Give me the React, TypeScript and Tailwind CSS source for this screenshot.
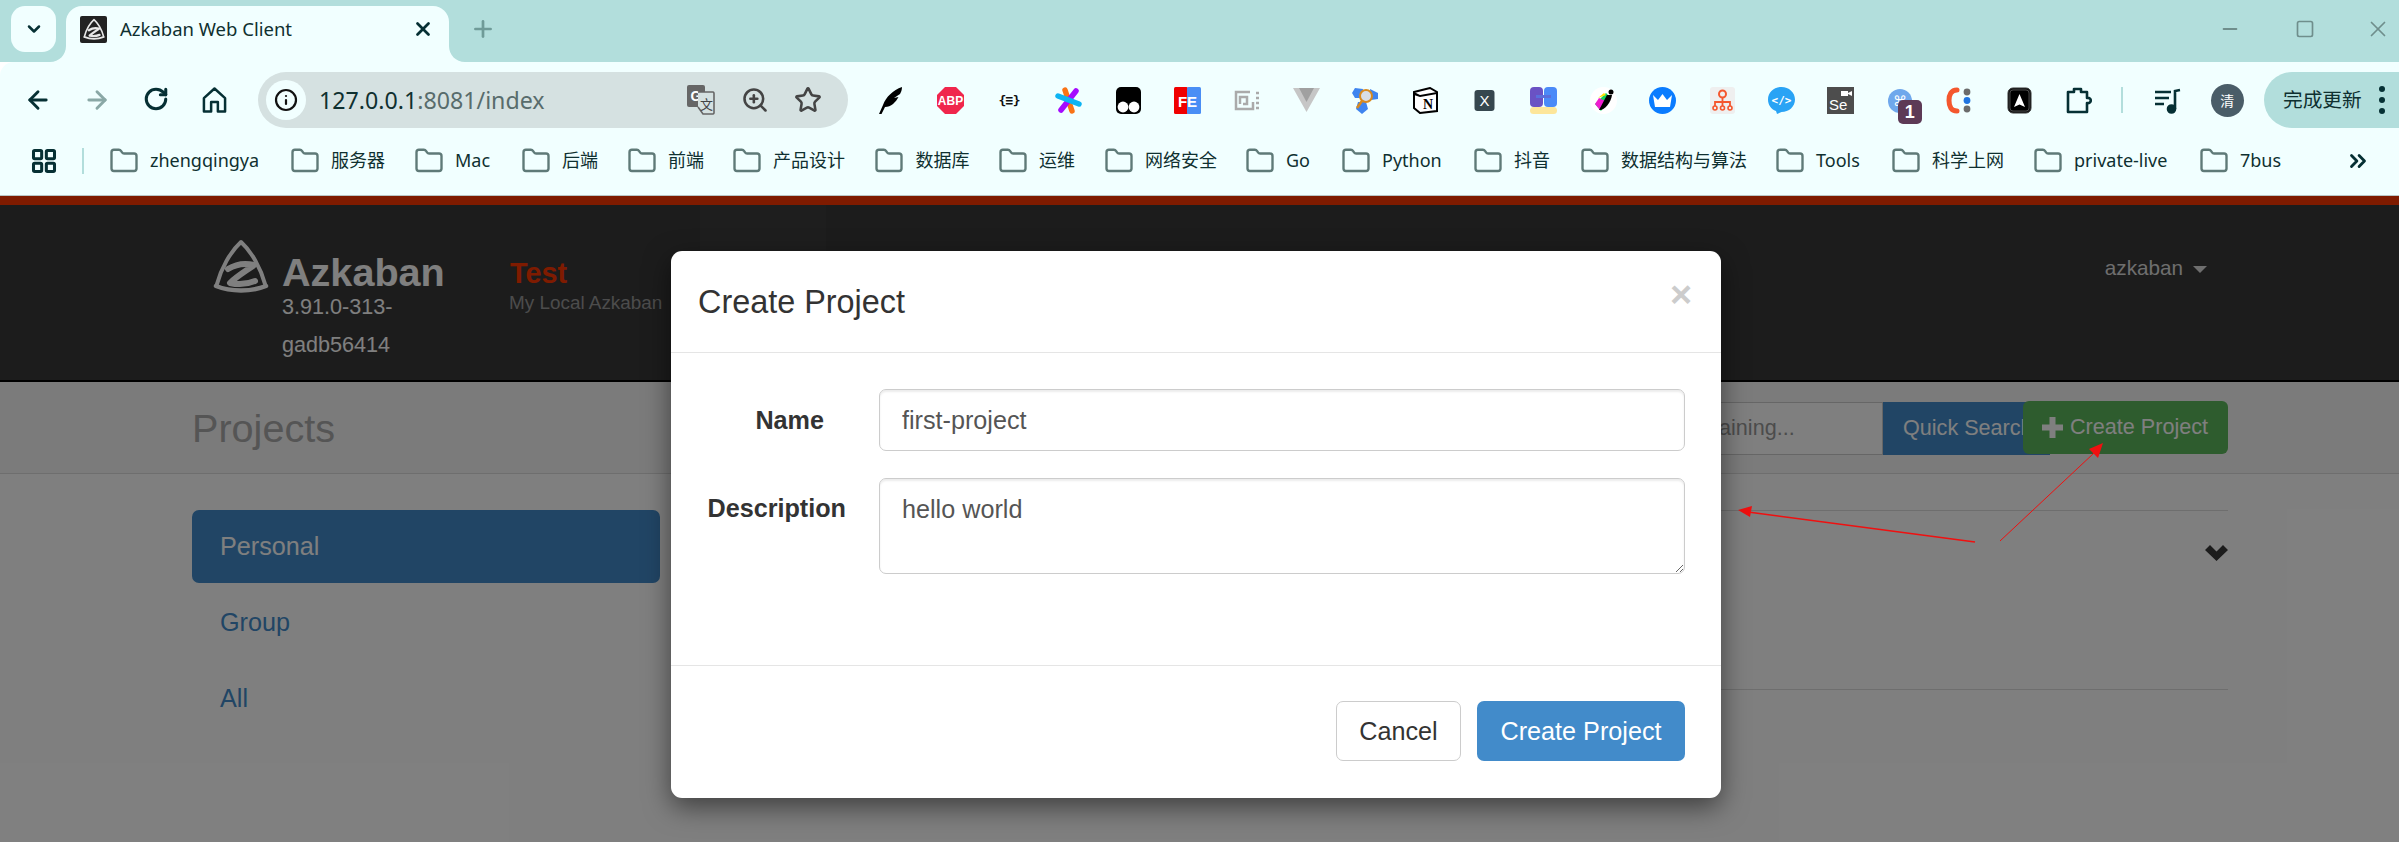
import { ArrowLeft, ArrowRight, ChevronDown, ChevronsRight, Folder, Info, LayoutGrid, Minus, Plus, RotateCw, Square, Star, X, ZoomIn } from 'lucide-react';

const BOOKMARKS = [
  { label: 'zhengqingya', w: 'w-[111px]' },
  { label: '服务器', w: 'w-[54px]' },
  { label: 'Mac', w: 'w-[37px]' },
  { label: '后端', w: 'w-[36px]' },
  { label: '前端', w: 'w-[35px]' },
  { label: '产品设计', w: 'w-[72.5px]' },
  { label: '数据库', w: 'w-[53.5px]' },
  { label: '运维', w: 'w-[36px]' },
  { label: '网络安全', w: 'w-[71px]' },
  { label: 'Go', w: 'w-[26px]' },
  { label: 'Python', w: 'w-[62px]' },
  { label: '抖音', w: 'w-[37px]' },
  { label: '数据结构与算法', w: 'w-[125px]' },
  { label: 'Tools', w: 'w-[46px]' },
  { label: '科学上网', w: 'w-[72px]' },
  { label: 'private-live', w: 'w-[96px]' },
  { label: '7bus', w: 'w-[42px]' },
];

function AzkabanLogo({ className, color }: { className: string; color: string }) {
  return (
    <svg viewBox="0 0 56 54" className={className} fill="none" stroke={color} strokeLinecap="round" strokeLinejoin="round">
      <path d="M4 45 C8 30 17 13 28 3 C39 13 48 30 52 45" strokeWidth="4" />
      <path d="M3 47 C18 53 38 53 53 47" strokeWidth="4.5" />
      <path d="M15 30 C23 25 33 24 41 26 C33 32 24 37 17 44 C26 46 35 45 42 42" strokeWidth="6" />
    </svg>
  );
}

function ExtensionIcons() {
  const box = 'w-[27px] h-[27px]';
  return [
    <svg key="feather" viewBox="0 0 27 27" className={box}><path d="M25 0 C16 3 9 10 6 18 L2 27 L4.5 27 L8 20 C14 20 19 15 21.5 10 L17 11 L23 7 C24 5 25 3 25 0 Z" fill="#000" /></svg>,
    <svg key="abp" viewBox="0 0 27 27" className={box}><polygon points="8,0 19,0 27,8 27,19 19,27 8,27 0,19 0,8" fill="#f0264c" /><text x="13.5" y="18" textAnchor="middle" fontSize="12" fontWeight="700" fill="#fff" fontFamily="Liberation Sans">ABP</text></svg>,
    <svg key="json" viewBox="0 0 27 27" className={box}><text x="13.5" y="18" textAnchor="middle" fontSize="13" fontWeight="700" fill="#111" fontFamily="DejaVu Sans Mono" textLength="22">{'{≡}'}</text></svg>,
    <svg key="aster" viewBox="0 0 27 27" className={box} strokeLinecap="round" strokeWidth="5.5"><path d="M10 3 L17 24" stroke="#f97316" /><path d="M21 4 L6 23" stroke="#a50bff" /><path d="M3 9 L24 17" stroke="#0db4f3" /></svg>,
    <svg key="tamper" viewBox="0 0 27 27" className={box}><rect x="1" y="0" width="25" height="27" rx="5" fill="#000" /><circle cx="8" cy="20" r="5.4" fill="#fff" /><circle cx="19" cy="20" r="5.4" fill="#fff" /></svg>,
    <svg key="fe" viewBox="0 0 27 27" className={box}><rect width="14" height="27" rx="1.5" fill="#f00000" /><rect x="13" width="14" height="27" rx="1.5" fill="#4a8ef5" /><text x="13.5" y="20" textAnchor="middle" fontSize="15" fontWeight="700" fill="#fff" fontFamily="Liberation Sans">FE</text></svg>,
    <svg key="spiral" viewBox="0 0 27 27" className={box} fill="none" stroke="#aaa" strokeWidth="2.5"><path d="M16 5 H2 V22 H19 V15" /><path d="M6 17 V10 H13 V17 H9" /><path d="M22 6 H25 M22 11 H25 M22 16 H25 M22 21 H25" /></svg>,
    <svg key="vue" viewBox="0 0 27 27" className={box}><polygon points="0,1 27,1 13.5,25" fill="#c6c6c6" /><polygon points="6,1 21,1 13.5,15" fill="#a0a0a0" /></svg>,
    <svg key="hex" viewBox="0 0 27 27" className={box}><polygon points="3,1 11,2 10,11 3,11 0,6" fill="#3f84ef" /><polygon points="18,2 26,6 26,12 19,13" fill="#3f84ef" /><polygon points="6,15 14,15 16,22 10,27 4,22" fill="#3f84ef" /><circle cx="14" cy="9" r="6" fill="#d8dde6" stroke="#d98a1f" strokeWidth="2" /><path d="M10 14 L5 21" stroke="#d98a1f" strokeWidth="2.6" /></svg>,
    <svg key="notion" viewBox="0 0 27 27" className={box}><polygon points="2,5 18,1 25,5 25,24 8,26 2,21" fill="#fff" stroke="#000" strokeWidth="2" /><polygon points="2,5 8,8 25,5 25,7 8,10 2,8" fill="#000" /><text x="16" y="22" textAnchor="middle" fontSize="14" fontWeight="700" fill="#000" fontFamily="Liberation Serif">N</text></svg>,
    <svg key="x" viewBox="0 0 27 27" className={box}><rect x="3.5" y="3" width="20" height="21" rx="3" fill="#36474f" /><text x="13.5" y="19" textAnchor="middle" fontSize="15" fill="#fff" fontFamily="Liberation Sans">X</text></svg>,
    <svg key="bars" viewBox="0 0 27 27" className={box}><rect width="13" height="20" rx="4" fill="#6a52c4" /><rect x="14" width="13" height="20" rx="4" fill="#4a8af8" /><rect x="6" y="8" width="15" height="3" fill="#5a6fdc" /><rect y="20" width="27" height="7" rx="3.5" fill="#fde69a" /></svg>,
    <svg key="colour" viewBox="0 0 27 27" className={box}><circle cx="13.5" cy="13.5" r="13.5" fill="#fff" /><path d="M5 17 L16 6 L20 10 L11 24 Z" fill="#12d05c" /><path d="M5 17 L9 11 L15 14 L10 23 Z" fill="#f01cd0" /><path d="M9 23 C14 24 21 16 22 8 L17 8 Z" fill="#000" /><circle cx="21" cy="5" r="2.5" fill="#000" /><path d="M8 11 L14 6 L16 8 Z" fill="#ffe100" /></svg>,
    <svg key="crown" viewBox="0 0 27 27" className={box}><circle cx="13.5" cy="13.5" r="13.5" fill="#0a7cff" /><polygon points="4,8 9,13 13.5,7 18,13 23,8 21,20 6,20" fill="#fff" /></svg>,
    <svg key="tree" viewBox="0 0 27 27" className={box} fill="none"><rect x="1" width="25" height="27" rx="3" fill="#efefef" /><circle cx="13.5" cy="7" r="3.5" stroke="#f4572e" strokeWidth="2" /><path d="M13.5 10 V15 M6 19 V15 H21 V19 M13.5 15 V19" stroke="#f4572e" strokeWidth="1.8" /><circle cx="6" cy="21" r="2" stroke="#f4572e" strokeWidth="1.6" /><circle cx="13.5" cy="21" r="2" stroke="#f4572e" strokeWidth="1.6" /><circle cx="21" cy="21" r="2" stroke="#f4572e" strokeWidth="1.6" /></svg>,
    <svg key="bubble" viewBox="0 0 27 27" className={box}><path d="M13.5 0 C21 0 27 5.5 27 12.5 C27 19.5 21 25 13.5 25 L9 27 L8 24 C3 22 0 18 0 12.5 C0 5.5 6 0 13.5 0 Z" fill="#29a3f5" /><text x="13.5" y="17" textAnchor="middle" fontSize="11" fontWeight="700" fill="#fff" fontFamily="DejaVu Sans Mono">{'</>'}</text></svg>,
    <svg key="se" viewBox="0 0 27 27" className={box}><rect width="27" height="27" fill="#4d4d4d" /><text x="2" y="23" fontSize="15" fill="#fff" fontFamily="Liberation Sans">Se</text><rect x="14" y="4" width="7" height="5" fill="#fff" /><polygon points="21,6 25,4 25,9 21,7" fill="#fff" /></svg>,
    <div key="cmd" className="relative w-[27px] h-[27px]">
      <svg viewBox="0 0 27 27" className={box}><circle cx="13" cy="14" r="12" fill="#6fa8ec" /><text x="13" y="19" textAnchor="middle" fontSize="14" fill="#fff" fontFamily="DejaVu Sans">⌘</text></svg>
      <div className="absolute left-[11px] top-[13px] w-[24px] h-[24px] rounded-[5px] bg-[#5d3a56] text-white text-[18px] font-bold leading-[24px] text-center font-['Liberation_Sans',sans-serif]">1</div>
    </div>,
    <svg key="c" viewBox="0 0 27 27" className={box}><path d="M11 3 C5 3 3 8 3 13.5 C3 19 5 24 11 24" fill="none" stroke="#f4572e" strokeWidth="5" strokeLinecap="round" /><circle cx="21" cy="5" r="3.4" fill="#6b6b6b" /><circle cx="21" cy="13.5" r="3.4" fill="#1f74e0" /><circle cx="21" cy="22" r="3.4" fill="#6b6b6b" /></svg>,
    <svg key="doc" viewBox="0 0 27 27" className={box}><rect x="2" y="1" width="23" height="25" rx="5" fill="#111" stroke="#333" /><rect x="4" y="3" width="19" height="21" rx="3" fill="#000" stroke="#777" strokeWidth="0.6" /><polygon points="13.5,7 19,20 13.5,17.5 8,20" fill="#fff" /></svg>,
    <svg key="puzzle" viewBox="0 0 27 27" className={box} fill="none" stroke="#063034" strokeWidth="2.6" strokeLinejoin="round"><path d="M3 5 H9 V2 H16 V5 H22 V11 C27 10 27 17 22 16 V25 H3 C3 22 3 8 3 5 Z" /></svg>,
  ];
}

function TabStrip() {
  return (
    <div className="h-[62px] bg-[#b2dedc] flex items-start">
      <div className="ml-[11px] mt-[6px] w-[45px] h-[46px] rounded-[14px] bg-[#f1ffff] flex items-center justify-center text-[#063034]">
        <ChevronDown size={20} strokeWidth={3} />
      </div>
      <div className="relative ml-[10px] mt-[6px] w-[383px] h-[56px] rounded-t-[16px] bg-[#f1ffff] flex items-center pl-[14px] pb-[10px]">
        <svg viewBox="0 0 16 16" className="absolute -left-[16px] bottom-0 w-[16px] h-[16px]"><path d="M16 0 V16 H0 C9 16 16 9 16 0 Z" fill="#f1ffff" /></svg>
        <svg viewBox="0 0 16 16" className="absolute -right-[16px] bottom-0 w-[16px] h-[16px]"><path d="M0 0 V16 H16 C7 16 0 9 0 0 Z" fill="#f1ffff" /></svg>
        <div className="w-[27px] h-[27px] bg-[#222] rounded-[2px] flex items-center justify-center">
          <AzkabanLogo className="w-[22px] h-[24px]" color="#e8e8e8" />
        </div>
        <span className="ml-[13px] text-[18.5px] text-[#0f3030]">Azkaban Web Client</span>
        <X size={22} strokeWidth={3} className="ml-auto mr-[15px] text-[#063034]" />
      </div>
      <Plus size={26} strokeWidth={2.5} className="ml-[21px] mt-[16px] text-[#6f9b98]" />
      <div className="ml-auto flex items-center h-[58px] text-[#6f8e8c] pr-[8px]">
        <Minus size={22} strokeWidth={2} />
        <Square size={20} strokeWidth={2} className="ml-[54px]" />
        <X size={26} strokeWidth={1.6} className="ml-[50px]" />
      </div>
    </div>
  );
}

function Toolbar() {
  return (
    <div className="h-[76px] bg-[#f1ffff] flex items-center rounded-tl-[14px]">
      <div className="ml-[8px] flex text-[#063034]">
        <div className="w-[59px] flex justify-center"><ArrowLeft size={28} strokeWidth={2.5} /></div>
        <div className="w-[59px] flex justify-center text-[#8aa8a6]"><ArrowRight size={28} strokeWidth={2.5} /></div>
        <div className="w-[59px] flex justify-center"><RotateCw size={26} strokeWidth={2.8} /></div>
        <div className="w-[59px] flex justify-center">
          <svg viewBox="0 0 26 28" className="w-[25px] h-[28px]" fill="none" stroke="#063034" strokeWidth="2.6" strokeLinejoin="round"><path d="M13 2 L24 12 V26 H16.5 V16 H9.5 V26 H2 V12 Z" /></svg>
        </div>
      </div>
      <div className="ml-[14px] w-[590px] h-[56px] rounded-full bg-[#d5e1e1] flex items-center">
        <div className="ml-[8px] w-[40px] h-[40px] rounded-full bg-[#f1ffff] flex items-center justify-center text-[#111]">
          <Info size={24} strokeWidth={2.2} />
        </div>
        <span className="ml-[13px] text-[23.2px] text-[#0f3030]">127.0.0.1<span className="text-[#586c6c]">:8081/index</span></span>
        <div className="ml-auto mr-[26px] flex items-center">
          <svg viewBox="0 0 28 30" className="w-[28px] h-[30px]">
            <rect x="0" y="0" width="18" height="22" rx="2" fill="#666" />
            <text x="9" y="16" textAnchor="middle" fontSize="14" fontWeight="700" fill="#fff" fontFamily="Liberation Sans">G</text>
            <path d="M11 7 H26 A1.5 1.5 0 0 1 27 8.5 V28 A1.5 1.5 0 0 1 26 29 H16 L11 22" fill="#d5e1e1" stroke="#666" strokeWidth="1.6" />
            <text x="19.5" y="24" textAnchor="middle" fontSize="13" fill="#444" fontFamily="Noto Sans CJK SC">文</text>
          </svg>
          <ZoomIn size={28} strokeWidth={2.2} className="ml-[26px] text-[#444]" />
          <Star size={28} strokeWidth={2.2} className="ml-[25px] text-[#444]" />
        </div>
      </div>
      <div className="ml-[13px] flex items-center">
        {ExtensionIcons().map((icon, i) => (
          <div key={i} className="w-[59.4px] flex justify-center">{icon}</div>
        ))}
      </div>
      <div className="ml-[13px] w-[2px] h-[26px] bg-[#b2dedc]" />
      <div className="ml-[15px] w-[59.4px] flex justify-center">
        <svg viewBox="0 0 27 27" className="w-[27px] h-[27px]" fill="none" stroke="#063034" strokeWidth="2.6"><path d="M1 5 H17 M1 11 H15 M1 17 H10" /><path d="M21 22 V4 L26 3" /><circle cx="17.5" cy="22" r="3.5" fill="#063034" /></svg>
      </div>
      <div className="w-[59.4px] flex justify-center">
        <div className="w-[33px] h-[33px] rounded-full bg-[#4a5d68] text-white text-[14px] leading-[33px] text-center">清</div>
      </div>
      <div className="ml-[7px] flex-1 h-[56px] rounded-l-[28px] bg-[#b2dedc] flex items-center pl-[19px] text-[#0f3030]">
        <span className="text-[19.7px] whitespace-nowrap">完成更新</span>
        <div className="ml-[17px] flex flex-col gap-[5px]">
          <span className="w-[6px] h-[6px] rounded-full bg-[#063034]" />
          <span className="w-[6px] h-[6px] rounded-full bg-[#063034]" />
          <span className="w-[6px] h-[6px] rounded-full bg-[#063034]" />
        </div>
      </div>
    </div>
  );
}

function BookmarksBar() {
  return (
    <div className="h-[58px] bg-[#f1ffff] border-b border-[#b9c6c6] flex items-center pb-[12px] text-[18px] text-[#0f3030]">
      <LayoutGrid size={28} strokeWidth={2.6} className="ml-[30px] text-[#063034]" />
      <div className="ml-[24px] w-[2px] h-[26px] bg-[#b2dedc]" />
      <div className="ml-[24.5px] flex items-center gap-[28.5px]">
        {BOOKMARKS.map((b) => (
          <div key={b.label} className="flex items-center gap-[11.5px]">
            <Folder size={30} strokeWidth={1.9} className="text-[#5f7a78]" />
            <span className={`${b.w} whitespace-nowrap`}>{b.label}</span>
          </div>
        ))}
      </div>
      <ChevronsRight size={26} strokeWidth={2.6} className="ml-[63px] text-[#063034]" />
    </div>
  );
}

function AzkabanPage() {
  return (
    <div className="h-[646px] bg-white text-[#333]">
      <div className="h-[9px] bg-[#ff3601]" />
      {/* navbar */}
      <div className="relative h-[177px] bg-[#383838] border-b-2 border-black flex items-start pl-[213px] pr-[192px]">
        <div className="absolute left-[700px] top-0 w-[126px] h-[46px] bg-[#3c3c3c]" />
        <AzkabanLogo className="mt-[34px] w-[56px] h-[54px]" color="#ffffff" />
        <div className="ml-[13px] mt-[45px] w-[228px]">
          <div className="text-[39.6px] leading-[44px] font-bold text-white">Azkaban</div>
          <div className="w-[130px] text-[21.6px] leading-[37.5px] text-white -mt-[6px]">3.91.0-313-gadb56414</div>
        </div>
        <div className="mt-[50px]">
          <div className="text-[28.8px] leading-[36px] font-bold text-[#ff3601]">Test</div>
          <div className="text-[18.9px] leading-[24px] text-[#999] -ml-[1px]">My Local Azkaban</div>
        </div>
        <div className="ml-auto mt-[49px] flex items-center text-[20.7px] leading-[28px] text-[#ddd]">
          azkaban
          <span className="ml-[10px] mt-[3px] w-0 h-0 border-x-[7px] border-x-transparent border-t-[7px] border-t-[#ddd]" />
        </div>
      </div>
      {/* page title and search */}
      <div className="h-[92px] bg-[#f6f6f6] border-b border-[#ddd] flex items-center pl-[192px] pr-[171px]">
        <h1 className="text-[39.6px] leading-[48px] text-[#aaa]">Projects</h1>
        <div className="ml-auto flex items-start">
          <input
            readOnly
            placeholder="Project name containing..."
            className="mt-[1px] w-[358px] h-[53px] bg-white border border-[#ccc] pl-[19px] text-[21.6px] placeholder:text-[#999] outline-none"
          />
          <div className="mt-[1px] w-[167px] h-[53px] bg-[#428bca] pl-[20px] text-[21.6px] leading-[51px] text-white whitespace-nowrap">Quick Search</div>
          <div className="relative -ml-[27px] w-[205px] h-[53px] rounded-[6px] bg-[#5cb85c] flex items-center pl-[19px] text-[21.6px] text-white">
            <svg viewBox="0 0 21 21" className="w-[21px] h-[21px]"><path d="M7.5 0 H13.5 V7.5 H21 V13.5 H13.5 V21 H7.5 V13.5 H0 V7.5 H7.5 Z" fill="#fff" /></svg>
            <span className="ml-[7px] whitespace-nowrap">Create Project</span>
          </div>
        </div>
      </div>
      {/* content */}
      <div className="flex pl-[192px] pr-[171px] pt-[36px]">
        <div className="w-[468px] flex flex-col gap-[3px] text-[25.2px] text-[#428bca]">
          <div className="h-[73px] rounded-[7px] bg-[#428bca] text-white pl-[28px] leading-[73px]">Personal</div>
          <div className="h-[73px] pl-[28px] leading-[73px]">Group</div>
          <div className="h-[73px] pl-[28px] leading-[73px]">All</div>
        </div>
        <div className="ml-[30px] flex-1 h-[180px] border-y border-[#ddd] flex justify-end pt-[34px]">
          <svg viewBox="0 0 23 16" className="w-[23px] h-[16px]"><path d="M0 5 L5 0 L11.5 6.5 L18 0 L23 5 L11.5 16 Z" fill="#383838" /></svg>
        </div>
      </div>
    </div>
  );
}

function CreateModal() {
  return (
    <div className="absolute left-[671px] top-[55px] w-[1050px] h-[547px] bg-white rounded-[11px] shadow-[0_9px_27px_rgba(0,0,0,0.5)] flex flex-col text-[#333]">
      <div className="h-[102px] shrink-0 border-b border-[#e5e5e5] flex items-center justify-between pl-[27px] pr-[29px]">
        <h2 className="text-[32.4px] leading-[44px]">Create Project</h2>
        <span className="mb-[16px] text-[37.8px] leading-[38px] font-bold text-[#ccc]">×</span>
      </div>
      <div className="h-[313px] shrink-0 border-b border-[#e5e5e5] pt-[36px] pr-[36px] flex flex-col gap-[27px] text-[25.2px]">
        <div className="flex items-start">
          <label className="w-[208px] shrink-0 pr-[55px] text-right font-bold leading-[62px]">Name</label>
          <input
            readOnly
            defaultValue="first-project"
            className="flex-1 h-[62px] rounded-[7px] border border-[#ccc] shadow-[inset_0_2px_2px_rgba(0,0,0,0.075)] px-[22px] text-[#555] outline-none"
          />
        </div>
        <div className="flex items-start">
          <label className="w-[208px] shrink-0 pr-[33px] text-right font-bold leading-[60px]">Description</label>
          <textarea
            readOnly
            defaultValue="hello world"
            className="flex-1 h-[96px] rounded-[7px] border border-[#ccc] shadow-[inset_0_2px_2px_rgba(0,0,0,0.075)] px-[22px] pt-[12px] leading-[36px] text-[#555] outline-none"
          />
        </div>
      </div>
      <div className="flex justify-end gap-[16px] pt-[35px] pr-[36px] text-[25.2px]">
        <div className="w-[125px] h-[60px] rounded-[7px] border border-[#ccc] text-center leading-[58px]">Cancel</div>
        <div className="w-[208px] h-[60px] rounded-[7px] bg-[#428bca] text-white text-center leading-[60px]">Create Project</div>
      </div>
    </div>
  );
}

export default function App() {
  return (
    <div className="w-[2399px] h-[842px] overflow-hidden bg-white">
      <div className="font-['Noto_Sans','Noto_Sans_CJK_SC',sans-serif]">
        <TabStrip />
        <Toolbar />
        <BookmarksBar />
      </div>
      <div className="relative font-['Liberation_Sans','Noto_Sans_CJK_SC',sans-serif]">
        <AzkabanPage />
        {/* modal backdrop */}
        <div className="absolute inset-0 bg-black/50" />
        {/* screenshot annotation arrows */}
        <svg className="absolute inset-0 w-[2399px] h-[646px]" viewBox="0 196 2399 646" fill="none">
          <path d="M1975 542 L1748 512" stroke="#f01010" strokeWidth="1.5" />
          <polygon points="1738,510 1752,506 1750,517" fill="#f01010" />
          <path d="M2000 541 L2094 453" stroke="#f01010" strokeWidth="1" />
          <polygon points="2103,443 2098,458 2089,449" fill="#f01010" />
        </svg>
        <CreateModal />
      </div>
    </div>
  );
}
